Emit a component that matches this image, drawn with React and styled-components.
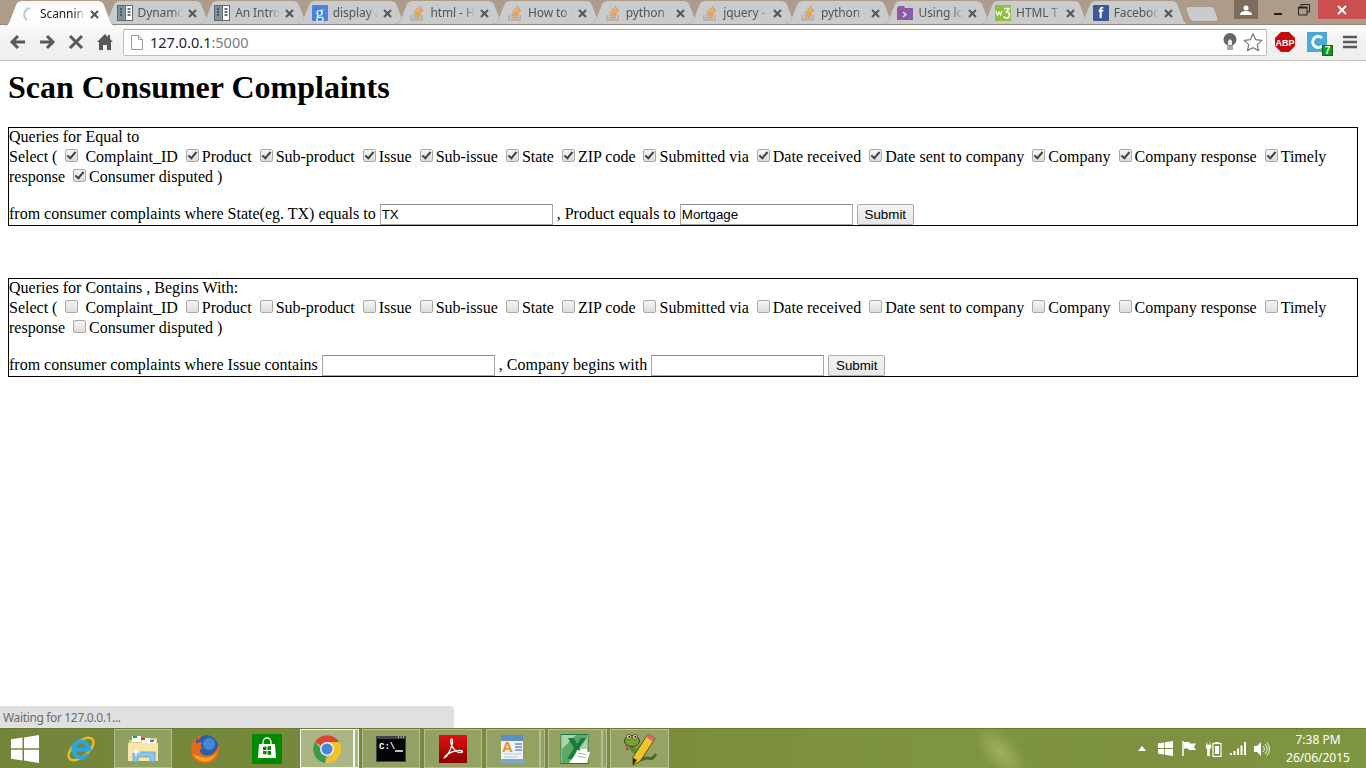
import React from "react";
import styled, { createGlobalStyle } from "styled-components";

const Global = createGlobalStyle`
  html, body { margin: 0; padding: 0; height: 100%; overflow: hidden; background: #fff; }
  #root { height: 768px; }
`;

const Page = styled.div`
  width: 1366px;
  height: 768px;
  display: flex;
  flex-direction: column;
  font-family: "Liberation Serif", "Times New Roman", serif;
  font-size: 16px;
  color: #000;
`;

/* ---------- browser chrome ---------- */
const TabStrip = styled.div`
  height: 25px;
  box-sizing: border-box;
  flex: none;
  display: flex;
  align-items: flex-start;
  background: #ae9c8b;
  border-bottom: 1px solid #8d8880;
  padding-left: 4px;
  font-family: "Noto Sans", "Open Sans", sans-serif;
`;
const TabList = styled.div`
  display: flex;
  padding-top: 1px;
`;
const Tab = styled.div`
  position: relative;
  z-index: ${(p) => (p.$active ? 2 : 1)};
  width: 112px;
  height: ${(p) => (p.$active ? 25 : 23)}px;
  margin-right: -14.4px;
  padding: 0 17px 0 15px;
  box-sizing: border-box;
  display: flex;
  align-items: center;
  gap: 5px;
  filter: drop-shadow(0 0 0.6px #77736c);
  &::before {
    content: "";
    position: absolute;
    inset: 0;
    z-index: -1;
    background: ${(p) => (p.$active ? "linear-gradient(#f6f6f6, #ffffff 40%, #fbfbfb)" : "#c9cbcd")};
    clip-path: path("M0 ${(p) => (p.$active ? 25 : 23)} C5 ${(p) => (p.$active ? 25 : 23)} 6 20 8 14 L12 4 C13 1 15 0 18 0 H94 C97 0 99 1 100 4 L105 17 C106 21 108 ${(p) => (p.$active ? 25 : 23)} 112 ${(p) => (p.$active ? 25 : 23)} Z");
  }
`;
const TabTitle = styled.span`
  flex: 1;
  min-width: 0;
  white-space: nowrap;
  overflow: hidden;
  font-size: 12px;
  letter-spacing: -0.1px;
  color: ${(p) => (p.$active ? "#222" : "#555")};
  -webkit-mask-image: linear-gradient(to right, #000 76%, transparent 100%);
  mask-image: linear-gradient(to right, #000 76%, transparent 100%);
`;
const TabClose = styled.svg`
  flex: none;
  width: 9px;
  height: 9px;
  margin-top: 1px;
`;
const Favicon = styled.span`
  flex: none;
  width: 16px;
  height: 16px;
  display: flex;
  align-items: center;
  justify-content: center;
  color: #fff;
  font-weight: ${(p) => (p.$serif ? 400 : 700)};
  background: ${(p) => p.$bg || "transparent"};
  border-radius: 1px;
  font-family: ${(p) => (p.$serif ? '"Liberation Serif", serif' : '"Liberation Sans", sans-serif')};
  font-size: ${(p) => p.$size || 14}px;
  line-height: 16px;
`;
const NewTab = styled.div`
  width: 28px;
  height: 14px;
  margin: 7px 0 0 13px;
  background: #c9cbcd;
  border-radius: 3px;
  transform: skewX(20deg);
  box-shadow: 0 0 1px #7d7a74;
`;
const Spacer = styled.div`
  flex: 1;
`;
const WindowButtons = styled.div`
  display: flex;
  align-items: flex-start;
  height: 19px;
`;
const UserButton = styled.div`
  width: 24px;
  height: 19px;
  background: #7b6c5e;
  display: flex;
  align-items: center;
  justify-content: center;
  margin-right: 8px;
`;
const WinBtn = styled.div`
  width: ${(p) => p.$w}px;
  height: 19px;
  background: ${(p) => p.$bg || "transparent"};
  display: flex;
  align-items: center;
  justify-content: center;
`;

const Toolbar = styled.div`
  height: 36px;
  flex: none;
  box-sizing: border-box;
  display: flex;
  align-items: center;
  padding: 0 8px 1px 8px;
  background: linear-gradient(#fbfbfb, #f2f2f2 40%, #eeeeee);
  border-bottom: 1px solid #c8c8c8;
`;
const NavIcon = styled.svg`
  flex: none;
  width: 20px;
  height: 18px;
  margin-right: ${(p) => p.$mr}px;
`;
const Omnibox = styled.div`
  flex: 1;
  height: 27px;
  box-sizing: border-box;
  margin-right: 8px;
  background: #fff;
  border: 1px solid #bdbdbd;
  border-top-color: #a8a8a8;
  border-radius: 2px;
  display: flex;
  align-items: center;
  padding: 0 3px 0 7px;
  gap: 7px;
`;
const Url = styled.div`
  flex: 1;
  font-family: "Noto Sans", "Open Sans", sans-serif;
  font-size: 14.5px;
  color: #222;
  span { color: #7d7d7d; }
`;
const OmniIcon = styled.svg`
  flex: none;
  margin-left: ${(p) => p.$ml || 0}px;
`;
const Ext = styled.div`
  flex: none;
  position: relative;
  display: flex;
  margin-left: ${(p) => p.$ml || 0}px;
`;
const Badge = styled.span`
  position: absolute;
  right: -6px;
  bottom: -4px;
  width: 11px;
  height: 11px;
  background: #0a9a17;
  border: 1px solid #0b6f12;
  box-sizing: border-box;
  color: #fff;
  font: 700 10px/10px "Liberation Sans", sans-serif;
  text-align: center;
`;

/* ---------- page content ---------- */
const Content = styled.main`
  flex: 1;
  min-height: 0;
  position: relative;
  padding: 8px 8px 0;
  background: #fff;
`;
const Title = styled.h1`
  margin: 0 0 21px;
  font-size: 32px;
  font-weight: 700;
  line-height: 37px;
`;
const QueryForm = styled.form`
  border: 1px solid #000;
  margin-bottom: 52px;
`;
const Check = styled.input.attrs({ type: "checkbox" })`
  appearance: none;
  -webkit-appearance: none;
  position: relative;
  box-sizing: border-box;
  width: 13px;
  height: 13px;
  margin: 3px 3px 0 4px;
  border: 1px solid #a8a8a8;
  border-radius: 2px;
  background: linear-gradient(#f6f6f6, #dcdcdc);
  &:checked::before {
    content: "";
    position: absolute;
    left: 3px;
    top: 0;
    width: 3px;
    height: 7px;
    border: solid #444;
    border-width: 0 2.5px 2.5px 0;
    transform: rotate(40deg);
  }
`;
const TextBox = styled.input.attrs({ type: "text" })`
  box-sizing: border-box;
  width: 173px;
  height: 21px;
  padding: 1px;
  margin: 0;
  border: 1px solid #a9a9a9;
  border-top-color: #8e8e8e;
  background: #fff;
  font: 13.33px "Liberation Sans", Arial, sans-serif;
  color: #000;
  outline: none;
`;
const Submit = styled.button.attrs({ type: "button" })`
  box-sizing: border-box;
  width: 57px;
  height: 21px;
  padding: 0;
  margin: 0;
  border: 1px solid #ababab;
  border-radius: 2px;
  background: linear-gradient(#f4f4f4, #e6e6e6);
  font: 13.33px "Liberation Sans", Arial, sans-serif;
  color: #000;
`;
const StatusBubble = styled.div`
  position: absolute;
  left: 0;
  bottom: 0;
  width: 454px;
  height: 22px;
  box-sizing: border-box;
  padding-left: 3px;
  background: #e0e0e0;
  border-radius: 0 4px 0 0;
  color: #6b6b6b;
  font: 12px/23px "Noto Sans", "Open Sans", sans-serif;
  letter-spacing: -0.35px;
`;

/* ---------- taskbar ---------- */
const Taskbar = styled.footer`
  height: 40px;
  flex: none;
  box-sizing: border-box;
  display: flex;
  align-items: stretch;
  position: relative;
  overflow: hidden;
  background: linear-gradient(90deg, #73853a 0%, #7a8c3d 45%, #7f9440 70%, #7d9140 85%, #80953f 100%);
  border-top: 1px solid #6a7a35;
  &::after {
    content: "";
    position: absolute;
    left: 985px;
    top: -6px;
    width: 36px;
    height: 64px;
    background: radial-gradient(ellipse at 50% 45%, rgba(190, 205, 120, 0.5), rgba(190, 205, 120, 0) 70%);
    transform: rotate(-40deg);
  }
`;
const TaskIcons = styled.div`
  display: flex;
  align-items: stretch;
  position: relative;
  z-index: 1;
`;
const PlainIcon = styled.div`
  width: ${(p) => p.$w}px;
  margin-right: ${(p) => p.$mr || 0}px;
  margin-left: ${(p) => p.$ml || 0}px;
  display: flex;
  align-items: center;
  justify-content: center;
`;
const TaskButton = styled.div`
  box-sizing: border-box;
  width: ${(p) => p.$w}px;
  margin-left: ${(p) => p.$ml || 0}px;
  display: flex;
  align-items: center;
  justify-content: center;
  background: ${(p) => (p.$active ? "rgba(255,255,255,.38)" : "rgba(255,255,255,.2)")};
  border: 1px solid ${(p) => (p.$active ? "rgba(255,255,255,.85)" : "rgba(255,255,255,.3)")};
`;
const Sliver = styled.div`
  box-sizing: border-box;
  width: 5px;
  background: ${(p) => (p.$active ? "rgba(255,255,255,.38)" : "rgba(255,255,255,.2)")};
  border: 1px solid ${(p) => (p.$active ? "rgba(255,255,255,.85)" : "rgba(255,255,255,.3)")};
`;
const Tray = styled.div`
  margin-left: auto;
  position: relative;
  z-index: 1;
  display: flex;
  align-items: center;
`;
const TrayIcon = styled.svg`
  flex: none;
  margin-right: ${(p) => p.$mr}px;
`;
const Clock = styled.div`
  width: 78px;
  margin: 0 9px 0 0;
  text-align: center;
  color: #fff;
  font: 12px/18px "Noto Sans", "Open Sans", sans-serif;
`;

/* ---------- icons ---------- */
const XMark = () => (
  <TabClose viewBox="0 0 9 9">
    <path d="M1 1l7 7M8 1L1 8" stroke="#555" strokeWidth="2" />
  </TabClose>
);
const Spinner = () => (
  <svg width="16" height="16" viewBox="0 0 16 16">
    <path d="M11 2.2A6.5 6.5 0 0 0 8 14" fill="none" stroke="#b9c9dc" strokeWidth="2" />
  </svg>
);
const BookIcon = () => (
  <svg width="16" height="16" viewBox="0 0 16 16">
    <rect x="0.5" y="0.5" width="15" height="15" fill="#fff" stroke="#5c6a70" />
    <rect x="1" y="1" width="6.5" height="14" fill="#7f929b" />
    <rect x="7.5" y="1" width="1.5" height="14" fill="#5c6a70" />
    <path d="M3 4h2M3 7h2M3 10h2M10.5 4h3M10.5 7h3M10.5 10h3" stroke="#39454a" strokeWidth="1.6" />
  </svg>
);
const StackIcon = () => (
  <svg width="16" height="16" viewBox="0 0 16 16">
    <path d="M2 10v5h11v-5" fill="none" stroke="#a9a39a" strokeWidth="1.2" />
    <path d="M4 12.8h7" stroke="#a9a39a" strokeWidth="1.3" />
    <path d="M4 10.6l7 .5M4.5 8.2l6.8 1.6M5.6 5.8l6.2 2.8M7.4 3.4l5.4 3.9M9.8 1.2l4 5" stroke="#ee9a3a" strokeWidth="1.4" />
  </svg>
);
const VsIcon = () => (
  <svg width="16" height="16" viewBox="0 0 16 16">
    <path d="M0 3l2-2h5l1 2h8v12H0z" fill="#8d5ba5" />
    <path d="M6 7l3 2.5L6 12" fill="none" stroke="#e9dcf0" strokeWidth="1.4" />
  </svg>
);
const W3Icon = () => (
  <svg width="16" height="16" viewBox="0 0 16 16">
    <rect width="16" height="16" fill="#8ebf42" />
    <path d="M1 6l1.5 4L4 7l1.5 3L7 6" fill="none" stroke="#fff" strokeWidth="1.2" />
    <path d="M9 3.5h5L11.5 7c2 0 3 1.2 3 3s-1.5 3-3 3-2.3-.7-2.8-1.6" fill="none" stroke="#fff" strokeWidth="1.5" />
  </svg>
);

const WindowsLogo = ({ size = 28, color = "#fff" }) => (
  <svg width={size} height={size} viewBox="0 0 28 28">
    <path d="M0 4.2l11.5-1.6v10.6H0zM13 2.4L28 0v13.2H13zM0 14.8h11.5v10.6L0 23.8zM13 14.8h15V28l-15-2.4z" fill={color} />
  </svg>
);
const IEIcon = () => (
  <svg width="32" height="32" viewBox="0 0 32 32">
    <ellipse cx="16" cy="16" rx="15" ry="7.5" transform="rotate(-40 16 16)" fill="none" stroke="#e8bd2a" strokeWidth="2.4" />
    <path d="M26 18.500H11.400c.4 3 2.400 4.600 5 4.600 2.200 0 3.800-1 4.800-2.800h4C23.800 24 20 26.500 16.200 26.500 10.500 26.500 6.500 22 6.500 16.600 6.500 10.800 10.800 6.500 16.400 6.500c5.800 0 10 4.800 9.600 12zM11.500 14.800h9.400C20.500 12 18.800 10.400 16.200 10.400c-2.600 0-4.200 1.700-4.700 4.400z" fill="#2aa6e0" />
  </svg>
);
const ExplorerIcon = () => (
  <svg width="32" height="30" viewBox="0 0 32 30">
    <path d="M2 6h12l2-2h14v22H2z" fill="#e8cf7a" />
    <rect x="5" y="2" width="9" height="6" fill="#fff" />
    <rect x="15" y="4" width="8" height="5" fill="#fff" />
    <rect x="22" y="6" width="7" height="5" fill="#fff" />
    <rect x="6" y="2" width="4" height="2" fill="#2e9e3e" />
    <rect x="14" y="4" width="4" height="2" fill="#c8392b" />
    <rect x="23" y="6" width="4" height="2" fill="#2e86d8" />
    <path d="M1 9h30v18H1z" fill="#f8e6a4" />
    <path d="M6 18h22v10h-5v-5H11v5H6z" fill="#8cc6e6" stroke="#5e9fca" strokeWidth="0.8" />
    <path d="M8 17l1-4 1 4 4 1-4 1-1 4-1-4-4-1z" fill="#fff" />
  </svg>
);
const FirefoxIcon = () => (
  <svg width="30" height="30" viewBox="0 0 30 30">
    <circle cx="15.500" cy="14" r="13" fill="#2a5ea8" />
    <circle cx="19" cy="10" r="6" fill="#3f8ad0" />
    <path d="M1 15c0 9 6 14.500 14 14.500 8 0 14-6 14-13.500 0-2-.4-3.600-1-5-.8 6-5.500 10.500-11 10.500-4 0-7-2-7.500-5.500 1-1 2.200-1.500 3.300-2-2.300-1-2.600-3-.8-5.500C9 8 7.500 9 6 10 5.500 8 6 5 7.500 2.500 3.500 5.500 1 10 1 15z" fill="#e56a1c" />
    <path d="M3 20c3 6 9 8.500 14 7.500 5-1 9-5 10-10-3 5-8 7-13 6-5-1-8-2-11-3.500z" fill="#f4a51f" />
    <path d="M7.500 2.500C10 1.500 12 1 14 1c-3 1-5 3-5.500 6z" fill="#e9721f" />
  </svg>
);
const StoreIcon = () => (
  <svg width="30" height="30" viewBox="0 0 30 30">
    <rect width="30" height="30" fill="#008a00" />
    <path d="M7 10h16l1 14H6z" fill="#fff" />
    <path d="M11 10V8a4 4 0 0 1 8 0v2" fill="none" stroke="#fff" strokeWidth="1.3" />
    <path d="M11 13l3.500-.5v3.500H11zM15.500 12.400l3.500-.4v4h-3.500zM11 17h3.500v3.500L11 20zM15.500 17H19v4l-3.500-.5z" fill="#008a00" />
  </svg>
);
const ChromeIcon = () => (
  <svg width="30" height="30" viewBox="0 0 30 30">
    <path d="M15 15L3 8.100A14 14 0 0 1 27.100 8H15z" fill="#db4437" />
    <path d="M15 15l-6 .1L3 8.100A14 14 0 0 0 13 28.900z" fill="#3d9b45" />
    <path d="M15 8h12.100A14 14 0 0 1 13 28.900L19 19z" fill="#f2c429" />
    <circle cx="15" cy="15" r="7" fill="#e8eef8" />
    <circle cx="15" cy="15" r="5.500" fill="#4a86d8" />
  </svg>
);
const CmdIcon = () => (
  <svg width="30" height="26" viewBox="0 0 30 26">
    <rect x="0" y="0" width="30" height="26" fill="#3f4448" />
    <rect x="1" y="3" width="28" height="22" fill="#050505" />
    <path d="M22 1h1M24.500 1h1M27 1h1" stroke="#ccc" strokeWidth="1.500" />
    <text x="3" y="13" fontFamily="Liberation Mono, monospace" fontSize="9" fontWeight="700" fill="#fff">C:\</text>
    <path d="M19 15h8" stroke="#fff" strokeWidth="1.500" />
  </svg>
);
const PdfIcon = () => (
  <svg width="28" height="28" viewBox="0 0 28 28">
    <defs>
      <linearGradient id="pdfg" x1="0" y1="0" x2="0" y2="1">
        <stop offset="0" stopColor="#e01010" />
        <stop offset="1" stopColor="#8e0000" />
      </linearGradient>
    </defs>
    <rect width="28" height="28" fill="url(#pdfg)" />
    <path d="M5 23c3-1 6-7 8-13 1-3 .5-6-.5-6s-1 3 0 6c1.500 3 4 6 6 7 2 .7 5 .7 5-.5 0-1.500-4-1.300-8-.3-4 1-8.500 3-10.500 7z" fill="none" stroke="#fff" strokeWidth="1.300" />
  </svg>
);
const OfficeIcon = () => (
  <svg width="26" height="32" viewBox="0 0 26 32">
    <rect x="1" y="2" width="22" height="8" fill="#5b8fc6" />
    <rect x="1" y="8" width="22" height="20" fill="#eef3f9" />
    <rect x="1" y="26" width="24" height="4" fill="#7ea6cf" />
    <path d="M15 11h7M15 14h7M15 17h7" stroke="#6b93c2" strokeWidth="1.500" />
    <path d="M4 21h17M4 24h14" stroke="#b6c6d8" strokeWidth="1" />
    <text x="2" y="19" fontFamily="Liberation Sans, sans-serif" fontSize="15" fontWeight="700" fill="#ef8a1d">A</text>
  </svg>
);
const ExcelIcon = () => (
  <svg width="30" height="30" viewBox="0 0 30 30">
    <rect x="1" y="0.500" width="27" height="29" fill="#fff" stroke="#1f7a45" />
    <rect x="2" y="1" width="25" height="14" fill="#a9d3ad" />
    <path d="M2 15l14-14h11v3L9 29H2z" fill="#5da868" />
    <path d="M8 4h6l3 6 4-6h5l-7 10 7 11h-6l-4-7-4 7H7l7-11z" fill="#1e7b3f" />
    <path d="M17 16l13 2-3 11-13-4z" fill="#fff" />
    <path d="M18 19l8 1.500M17 22l8 1.500" stroke="#8fbf98" strokeWidth="1" />
  </svg>
);
const SnakeIcon = () => (
  <svg width="34" height="34" viewBox="0 0 34 34">
    <path d="M11 27c6 3 9-1 13-1s4 3 9-4" fill="none" stroke="#4c6a22" strokeWidth="3" />
    <path d="M8 14c2 4 3 6 7 5l4-5" fill="none" stroke="#5b8a2a" strokeWidth="5" />
    <ellipse cx="9" cy="9" rx="7.500" ry="5.500" fill="#7aa234" stroke="#33481a" />
    <circle cx="6" cy="5" r="2.500" fill="#f6e58a" stroke="#222" strokeWidth="0.600" />
    <circle cx="12" cy="5" r="2.500" fill="#f6e58a" stroke="#222" strokeWidth="0.600" />
    <circle cx="6.300" cy="5" r="1" fill="#111" />
    <circle cx="12.300" cy="5" r="1" fill="#111" />
    <path d="M2 13l3 3-2 2 3-1" fill="none" stroke="#c0242a" strokeWidth="1" />
    <path d="M25 2l7 4.500-15 23-7 3.500 0-8z" fill="#efc62d" stroke="#4b3b10" strokeWidth="0.800" />
    <path d="M25 2l7 4.500-2 3-7-4.500z" fill="#d66" />
    <path d="M10 33l0-7 4 2z" fill="#2a2211" />
  </svg>
);

const TABS = [
  { title: "Scanning Consumer", active: true, icon: <Spinner /> },
  { title: "Dynamo", icon: <BookIcon /> },
  { title: "An Intro", icon: <BookIcon /> },
  { title: "display a", icon: <Favicon $bg="#4a82e0" $serif $size={17}>g</Favicon> },
  { title: "html - H", icon: <StackIcon /> },
  { title: "How to c", icon: <StackIcon /> },
  { title: "python -", icon: <StackIcon /> },
  { title: "jquery - ", icon: <StackIcon /> },
  { title: "python -", icon: <StackIcon /> },
  { title: "Using lo", icon: <VsIcon /> },
  { title: "HTML T", icon: <W3Icon /> },
  { title: "Faceboo", icon: <Favicon $bg="#3b5998" $size={15}>f</Favicon> },
];

const FIELDS = [
  "Product", "Sub-product", "Issue", "Sub-issue", "State", "ZIP code", "Submitted via",
  "Date received", "Date sent to company", "Company", "Company response", "Timely response",
  "Consumer disputed )",
];

const FormBlock = ({ heading, checked, lead, mid, first, second }) => (
  <QueryForm>
    {heading}
    <br />
    Select ( <Check defaultChecked={checked} /> Complaint_ID{" "}
    {FIELDS.map((f) => (
      <React.Fragment key={f}>
        <Check defaultChecked={checked} />
        {f}{" "}
      </React.Fragment>
    ))}
    <br />
    <br />
    {lead} <TextBox defaultValue={first} /> , {mid} <TextBox defaultValue={second} />{" "}
    <Submit>Submit</Submit>
  </QueryForm>
);

export default function App() {
  return (
    <Page>
      <Global />
      <TabStrip>
        <TabList>
          {TABS.map((t, i) => (
            <Tab key={i} $active={t.active}>
              {t.icon}
              <TabTitle $active={t.active}>{t.title}</TabTitle>
              <XMark />
            </Tab>
          ))}
        </TabList>
        <NewTab />
        <Spacer />
        <WindowButtons>
          <UserButton>
            <svg width="12" height="10" viewBox="0 0 12 10">
              <circle cx="6" cy="3" r="2.500" fill="#fff" />
              <path d="M0 10c0-3 3-4 6-4s6 1 6 4z" fill="#fff" />
            </svg>
          </UserButton>
          <WinBtn $w={24}>
            <svg width="10" height="10" viewBox="0 0 10 10"><rect x="1" y="8" width="8" height="2" fill="#222" /></svg>
          </WinBtn>
          <WinBtn $w={28}>
            <svg width="12" height="12" viewBox="0 0 12 12">
              <path d="M3 2.500V.5h8.500V8H9.500M.5 3h8.500v8H.5z" fill="none" stroke="#222" />
              <rect x="0.500" y="3" width="8.500" height="1.500" fill="#222" />
            </svg>
          </WinBtn>
          <WinBtn $w={48} $bg="#c9504f">
            <svg width="10" height="10" viewBox="0 0 10 10"><path d="M1 1l8 8M9 1l-8 8" stroke="#fff" strokeWidth="2" /></svg>
          </WinBtn>
        </WindowButtons>
      </TabStrip>

      <Toolbar>
        <NavIcon $mr={9} viewBox="0 0 20 18">
          <path d="M17 9H4M10 3L4 9l6 6" fill="none" stroke="#595959" strokeWidth="3" />
        </NavIcon>
        <NavIcon $mr={9} viewBox="0 0 20 18">
          <path d="M3 9h13M10 3l6 6-6 6" fill="none" stroke="#595959" strokeWidth="3" />
        </NavIcon>
        <NavIcon $mr={9} viewBox="0 0 20 18">
          <path d="M4 3l12 12M16 3L4 15" fill="none" stroke="#595959" strokeWidth="3" />
        </NavIcon>
        <NavIcon $mr={8} viewBox="0 0 20 18">
          <path d="M10 1L2 9h2v8h4v-5h4v5h4V9h2l-3-3V2h-2v2z" fill="#595959" />
        </NavIcon>
        <Omnibox>
          <OmniIcon width="12" height="15" viewBox="0 0 12 15">
            <path d="M.5.5h7l4 4v10H.5z M7.500.5v4h4" fill="#fff" stroke="#9a9a9a" />
          </OmniIcon>
          <Url>127.0.0.1<span>:5000</span></Url>
          <OmniIcon width="14" height="18" viewBox="0 0 14 18">
            <circle cx="7" cy="6.500" r="6.500" fill="#666" />
            <path d="M5 8l2-2 2 2v4H5z" fill="#eee" />
            <rect x="4" y="13" width="6" height="4" fill="#aaa" />
          </OmniIcon>
          <OmniIcon $ml={-1} width="20" height="18" viewBox="0 0 20 18">
            <path d="M10 1l2.700 5.600 6.100.8-4.500 4.200 1.200 6L10 14.600 4.500 17.600l1.200-6L1.200 7.400l6.100-.8z" fill="#fff" stroke="#777" strokeWidth="1.200" />
          </OmniIcon>
        </Omnibox>
        <Ext>
          <svg width="20" height="20" viewBox="0 0 20 20">
            <path d="M6 0h8l6 6v8l-6 6H6l-6-6V6z" fill="#c50a0a" />
            <text x="10" y="13.500" textAnchor="middle" fontFamily="Liberation Sans, sans-serif" fontSize="9" fontWeight="700" fill="#fff">ABP</text>
          </svg>
        </Ext>
        <Ext $ml={12}>
          <svg width="20" height="20" viewBox="0 0 20 20">
            <rect width="20" height="20" fill="#4aa9d6" />
            <path d="M15 6a5.500 5.500 0 1 0 0 8" fill="none" stroke="#fff" strokeWidth="3" />
          </svg>
          <Badge>7</Badge>
        </Ext>
        <Ext $ml={15}>
          <svg width="16" height="14" viewBox="0 0 16 14">
            <path d="M1 2h14M1 7h14M1 12h14" stroke="#595959" strokeWidth="2.500" />
          </svg>
        </Ext>
      </Toolbar>

      <Content>
        <Title>Scan Consumer Complaints</Title>
        <FormBlock
          heading="Queries for Equal to"
          checked
          lead="from consumer complaints where State(eg. TX) equals to"
          mid="Product equals to"
          first="TX"
          second="Mortgage"
        />
        <FormBlock
          heading="Queries for Contains , Begins With:"
          checked={false}
          lead="from consumer complaints where Issue contains"
          mid="Company begins with"
          first=""
          second=""
        />
        <StatusBubble>Waiting for 127.0.0.1...</StatusBubble>
      </Content>

      <Taskbar>
        <TaskIcons>
          <PlainIcon $w={28} $ml={11}><WindowsLogo /></PlainIcon>
          <PlainIcon $w={32} $ml={26}><IEIcon /></PlainIcon>
          <TaskButton $w={58} $ml={17}><ExplorerIcon /></TaskButton>
          <PlainIcon $w={30} $ml={18}><FirefoxIcon /></PlainIcon>
          <PlainIcon $w={30} $ml={32}><StoreIcon /></PlainIcon>
          <TaskButton $w={54} $ml={18} $active><ChromeIcon /></TaskButton>
          <Sliver $active />
          <TaskButton $w={58} $ml={3}><CmdIcon /></TaskButton>
          <TaskButton $w={58} $ml={4}><PdfIcon /></TaskButton>
          <TaskButton $w={54} $ml={4}><OfficeIcon /></TaskButton>
          <Sliver />
          <TaskButton $w={54} $ml={3}><ExcelIcon /></TaskButton>
          <Sliver />
          <TaskButton $w={59} $ml={3}><SnakeIcon /></TaskButton>
        </TaskIcons>
        <Tray>
          <TrayIcon $mr={12} width="8" height="5" viewBox="0 0 8 5"><path d="M4 0l4 5H0z" fill="#fff" /></TrayIcon>
          <TrayIcon $mr={9} width="15" height="15" viewBox="0 0 28 28">
            <path d="M0 4.200l11.500-1.600v10.600H0zM13 2.400L28 0v13.200H13zM0 14.800h11.500v10.600L0 23.800zM13 14.800h15V28l-15-2.400z" fill="#fff" />
          </TrayIcon>
          <TrayIcon $mr={9} width="15" height="15" viewBox="0 0 15 15">
            <path d="M1 0v15" stroke="#fff" strokeWidth="1.500" /><path d="M2 1h5l1 1.500h6L12 6l2 3H7L6 7.500H2z" fill="#fff" />
          </TrayIcon>
          <TrayIcon $mr={8} width="16" height="16" viewBox="0 0 16 16">
            <path d="M1 1v3M4 1v3M0 4h5v3l-1.500 1v7h-2V8L0 7z" fill="#fff" stroke="#fff" strokeWidth="0.600" />
            <rect x="7" y="2.500" width="8" height="13" fill="none" stroke="#fff" strokeWidth="1.200" />
            <rect x="9" y="1" width="4" height="1.500" fill="#fff" />
            <rect x="9" y="5" width="4" height="8" fill="#fff" />
          </TrayIcon>
          <TrayIcon $mr={8} width="16" height="13" viewBox="0 0 16 13">
            <path d="M0 11h2v2H0zM3.500 9h2v4h-2zM7 6.500h2V13H7zM10.500 3.500h2V13h-2zM14 0h2v13h-2z" fill="#fff" />
          </TrayIcon>
          <TrayIcon $mr={9} width="16" height="16" viewBox="0 0 16 16">
            <path d="M0 5h3l4-4v14l-4-4H0z" fill="#fff" />
            <path d="M9 5a4 4 0 0 1 0 6M11 3a7 7 0 0 1 0 10M13 1.500a10 10 0 0 1 0 13" fill="none" stroke="#fff" strokeWidth="0.900" />
          </TrayIcon>
          <Clock>7:38 PM<br />26/06/2015</Clock>
        </Tray>
      </Taskbar>
    </Page>
  );
}
